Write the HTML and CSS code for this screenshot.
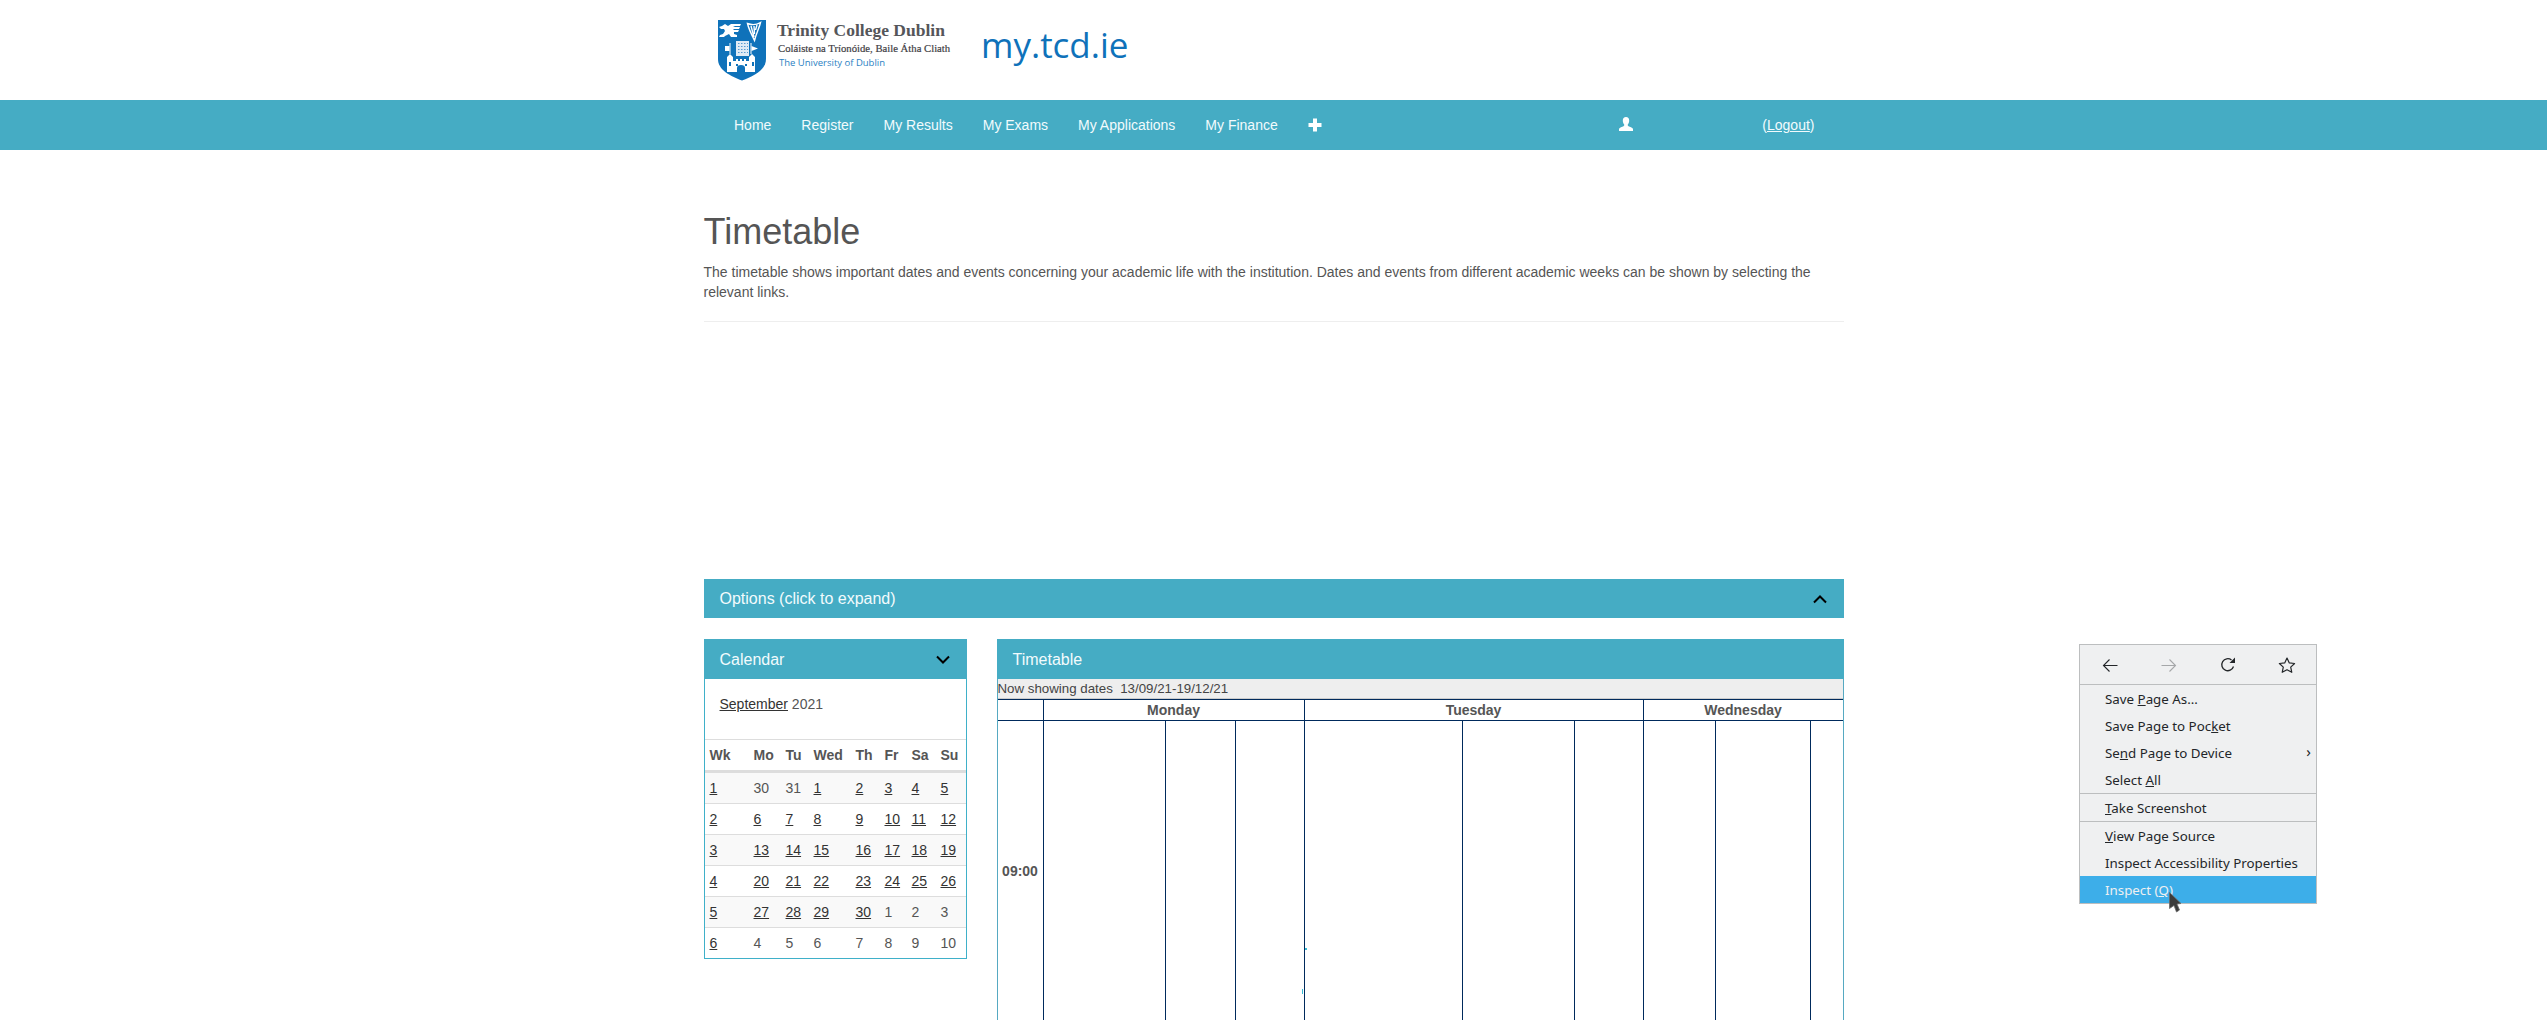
FILE: index.html
```html
<!DOCTYPE html>
<html lang="en">
<head>
<meta charset="utf-8">
<title>Timetable - my.tcd.ie</title>
<link rel="stylesheet" href="styles.css">
</head>
<body>
<header class="masthead">
  <div class="wrap masthead-inner">
    <div class="logo">
      <svg class="shield" viewBox="0 0 48 61" width="48" height="61" aria-hidden="true">
        <path fill="#0f72ba" d="M0 0H48V39C48 50 36 56 24 60.500C12 56 0 50 0 39Z"/>
        <path fill="#fff" d="M4 6l3-2 3 2 3-2h10l-1 2h-5l-2 1h7l-1 2h-5l-1 1h6l-1 2h-4l0 2 3 1 0 2-6 0-2-3-4 2-1 1h-5l1-2 3-1 2-3-1-2-3 0-2-2z"/>
        <path fill="none" stroke="#fff" stroke-width="1.400" d="M29.500 3.500c4 1.500 9 1.500 13-1-1 5-4 10-6 18-3-6-6-12-7-17zM33 6l3 11M36 6l0.500 8M39 5l-1.500 5"/>
        <rect x="18" y="21" width="13" height="15" fill="#dfeaf5"/>
        <path fill="none" stroke="#5a9bd2" stroke-width="1.200" stroke-dasharray="1.500 1.500" d="M20 23.500H30M20 26.500H30M20 29.500H30M20 32.500H30"/>
        <path fill="none" stroke="#fff" stroke-width="1" d="M12 23V34M33 23V34"/>
        <path fill="#fff" d="M7 26h4.500v5H7zM33.500 26L40 28.500L33.500 31z"/>
        <path fill="#fff" d="M9 37l3-3 3 3v4h3v-2h2v2h2v-2h2v2h2v-2h2v2h3v-4l3-3 3 3v15H9z"/>
        <path fill="#0f72ba" d="M19 52v-4a4 3 0 0 1 8 0v4zM11 42h2v4h-2zM34 42h2v4h-2zM18 44h2v2h-2zM27 44h2v2h-2z"/>
      </svg>
      <div class="logo-text">
        <div class="logo-name">Trinity College Dublin</div>
        <div class="logo-irish">Coláiste na Tríonóide, Baile Átha Cliath</div>
        <div class="logo-uni">The University of Dublin</div>
      </div>
    </div>
    <div class="site-name">my.tcd.ie</div>
  </div>
</header>

<nav class="navbar">
  <div class="wrap navbar-inner">
    <ul class="nav-links">
      <li><a href="#">Home</a></li>
      <li><a href="#">Register</a></li>
      <li><a href="#">My Results</a></li>
      <li><a href="#">My Exams</a></li>
      <li><a href="#">My Applications</a></li>
      <li><a href="#">My Finance</a></li>
      <li class="nav-plus">
        <svg viewBox="0 0 14 14" width="14" height="14" aria-hidden="true"><path fill="#fff" d="M5 0.500H9V5H13.500V9H9V13.500H5V9H0.500V5H5Z"/></svg>
      </li>
    </ul>
    <div class="nav-user">
      <svg viewBox="0 0 14 14" width="14" height="14" aria-hidden="true"><path fill="#fff" d="M7 0C4.900 0 3.800 1.500 3.800 3.500C3.800 5.200 4.400 6.700 5.200 7.600C5.400 8.300 5.200 8.900 4.500 9.300C3 10 0.800 10.500 0 11.800V14H14V11.800C13.200 10.500 11 10 9.500 9.300C8.800 8.900 8.600 8.300 8.800 7.600C9.600 6.700 10.200 5.200 10.200 3.500C10.200 1.500 9.100 0 7 0Z"/></svg>
      <span class="logout">(<a href="#">Logout</a>)</span>
    </div>
  </div>
</nav>

<main class="wrap content">
  <h1>Timetable</h1>
  <p class="intro">The timetable shows important dates and events concerning your academic life with the institution. Dates and events from different academic weeks can be shown by selecting the relevant links.</p>
  <hr class="rule">

  <div class="panel-head options">
    <span>Options (click to expand)</span>
    <svg class="chev" viewBox="0 0 14 10" width="14" height="10" aria-hidden="true"><path fill="none" stroke="#000" stroke-width="2" d="M1 8.500L7 2.500L13 8.500"/></svg>
  </div>

  <div class="columns">
    <section class="panel">
      <div class="panel-head">
        <span>Calendar</span>
        <svg class="chev" viewBox="0 0 14 10" width="14" height="10" aria-hidden="true"><path fill="none" stroke="#000" stroke-width="2" d="M1 1.500L7 7.500L13 1.500"/></svg>
      </div>
      <div class="month"><a href="#">September</a> 2021</div>
      <table class="cal">
        <colgroup><col class="c-wk"><col class="c-mo"><col class="c-tu"><col class="c-we"><col class="c-th"><col class="c-fr"><col class="c-sa"><col class="c-su"></colgroup>
        <thead><tr><th>Wk</th><th>Mo</th><th>Tu</th><th>Wed</th><th>Th</th><th>Fr</th><th>Sa</th><th>Su</th></tr></thead>
        <tbody>
          <tr><td><a href="#">1</a></td><td>30</td><td>31</td><td><a href="#">1</a></td><td><a href="#">2</a></td><td><a href="#">3</a></td><td><a href="#">4</a></td><td><a href="#">5</a></td></tr>
          <tr><td><a href="#">2</a></td><td><a href="#">6</a></td><td><a href="#">7</a></td><td><a href="#">8</a></td><td><a href="#">9</a></td><td><a href="#">10</a></td><td><a href="#">11</a></td><td><a href="#">12</a></td></tr>
          <tr><td><a href="#">3</a></td><td><a href="#">13</a></td><td><a href="#">14</a></td><td><a href="#">15</a></td><td><a href="#">16</a></td><td><a href="#">17</a></td><td><a href="#">18</a></td><td><a href="#">19</a></td></tr>
          <tr><td><a href="#">4</a></td><td><a href="#">20</a></td><td><a href="#">21</a></td><td><a href="#">22</a></td><td><a href="#">23</a></td><td><a href="#">24</a></td><td><a href="#">25</a></td><td><a href="#">26</a></td></tr>
          <tr><td><a href="#">5</a></td><td><a href="#">27</a></td><td><a href="#">28</a></td><td><a href="#">29</a></td><td><a href="#">30</a></td><td>1</td><td>2</td><td>3</td></tr>
          <tr><td><a href="#">6</a></td><td>4</td><td>5</td><td>6</td><td>7</td><td>8</td><td>9</td><td>10</td></tr>
        </tbody>
      </table>
    </section>

    <section class="panel panel-open">
      <div class="panel-head"><span>Timetable</span></div>
      <div class="showing">Now showing dates&nbsp; 13/09/21-19/12/21</div>
      <table class="tt">
        <colgroup><col class="t1"><col class="t2"><col class="t3"><col class="t4"><col class="t5"><col class="t6"><col class="t7"><col class="t8"><col class="t9"><col class="t10"></colgroup>
        <thead><tr><th></th><th colspan="3">Monday</th><th colspan="3">Tuesday</th><th colspan="3">Wednesday</th></tr></thead>
        <tbody>
          <tr>
            <th class="time">09:00</th>
            <td></td><td></td>
            <td class="ticked"><span class="tick tick-a"></span></td>
            <td class="ticked"><span class="tick tick-b"></span></td>
            <td></td><td></td><td></td><td></td><td></td>
          </tr>
        </tbody>
      </table>
    </section>
  </div>
</main>

<div class="ctx-menu">
  <div class="ctx-tools">
    <svg viewBox="0 0 16 14" width="16" height="14" aria-hidden="true"><path fill="none" stroke="#232629" stroke-width="1.100" d="M15.500 7.500H1.500M7.500 1.500L1.500 7.500L7.500 13.500"/></svg>
    <svg viewBox="0 0 16 14" width="16" height="14" aria-hidden="true"><path fill="none" stroke="#a5a7a9" stroke-width="1.100" d="M0.500 7.500H14.500M8.500 1.500L14.500 7.500L8.500 13.500"/></svg>
    <svg viewBox="0 0 16 16" width="16" height="16" aria-hidden="true"><path fill="none" stroke="#232629" stroke-width="1.300" d="M13.500 9.500A6 6 0 1 1 11.500 3"/><path fill="#232629" d="M15 0.500V6H9.500Z"/></svg>
    <svg class="ctx-star" viewBox="0 0 18 16" width="18" height="16" aria-hidden="true"><path fill="none" stroke="#232629" stroke-width="1.200" stroke-linejoin="round" d="M9 1L11.300 5.900L16.600 6.500L12.700 10.100L13.800 15.300L9 12.700L4.200 15.300L5.300 10.100L1.400 6.500L6.700 5.900Z"/></svg>
  </div>
  <div class="ctx-item">Save <u>P</u>age As…</div>
  <div class="ctx-item">Save Page to Poc<u>k</u>et</div>
  <div class="ctx-item">Se<u>n</u>d Page to Device<span class="ctx-more">›</span></div>
  <div class="ctx-item">Select <u>A</u>ll</div>
  <div class="ctx-sep"></div>
  <div class="ctx-item"><u>T</u>ake Screenshot</div>
  <div class="ctx-sep"></div>
  <div class="ctx-item"><u>V</u>iew Page Source</div>
  <div class="ctx-item">Inspect Accessibility Properties</div>
  <div class="ctx-item ctx-active">Inspect (<u>Q</u>)</div>
</div>
<svg class="cursor" viewBox="0 0 13 21" width="13" height="21" aria-hidden="true"><path fill="#3b3b3b" stroke="#6a6a6a" stroke-width="0.800" d="M0.500 0.500L12 11.500L8 12L10.500 18L7.500 20L5 13.500L0.500 16.500Z"/></svg>
</body>
</html>
```

FILE: styles.css
```css
* { box-sizing: border-box; }
html, body { margin: 0; padding: 0; height: 1020px; overflow: hidden; background: #fff; }
body { font-family: "Liberation Sans", Arial, sans-serif; font-size: 14px; line-height: 20px; color: #555; position: relative; }
a { color: inherit; }

.wrap { width: 1140px; margin-left: 703.5px; }

.masthead { height: 100px; }
.masthead-inner { display: flex; align-items: flex-start; padding-left: 14.5px; }
.logo { display: flex; width: 263px; padding-top: 20px; }
.shield { flex: none; display: block; }
.logo-text { margin-left: 11px; }
.logo-name { font-family: "Liberation Serif", serif; font-weight: 700; font-size: 17.500px; line-height: 20px; color: #55565a; white-space: nowrap; }
.logo-irish { font-family: "Liberation Serif", serif; font-weight: 400; font-size: 10.700px; line-height: 14px; color: #3f4044; -webkit-text-stroke: 0.2px #3f4044; white-space: nowrap; margin-top: 1px; margin-left: 1px; }
.logo-uni { font-family: "Open Sans", sans-serif; font-size: 9.500px; line-height: 14px; color: #2b7fc3; white-space: nowrap; margin-top: 1px; margin-left: 2px; }
.site-name { font-family: "Open Sans", sans-serif; font-size: 35px; line-height: 50px; color: #0f72ba; padding-top: 20px; }

.navbar { height: 50px; background: #45acc4; color: #f2fbfd; }
.navbar-inner { display: flex; justify-content: space-between; height: 50px; padding-left: 15.500px; }
.nav-links { display: flex; list-style: none; margin: 0; padding: 0; }
.nav-links a { display: block; padding: 0 15px; line-height: 50px; text-decoration: none; }
.nav-plus { display: flex; align-items: center; padding-left: 15.500px; }
.nav-plus svg { display: block; margin-top: -1px; }
.nav-user { display: flex; align-items: center; gap: 129px; padding-right: 29px; }
.nav-user svg { display: block; margin-top: -2px; }
.logout { line-height: 50px; }

h1 { margin: 0; padding-top: 62px; font-size: 36px; font-weight: 400; line-height: 40px; color: #555; }
.intro { margin: 10px 0 0; }
.rule { margin: 19px 0 0; border: 0; height: 1px; background: #eee; }

.panel-head { display: flex; justify-content: space-between; align-items: center; height: 40px; padding: 0 17px 0 16px; background: #45acc4; color: #f2fbfd; font-size: 16px; }
.options { height: 39px; margin-top: 257px; }
.chev { display: block; flex: none; }

.columns { display: grid; grid-template-columns: 263px 847px; column-gap: 30px; margin-top: 21px; align-items: start; }
.panel { border: 1px solid #3fb0c9; border-top: 0; }
.panel > .panel-head { margin: 0 -1px; padding-top: 1px; }
.panel-open { border-color: #56a9c2; border-bottom: 0; }

.month { height: 60px; padding: 15px 0 0 15px; color: #555; }
.month a { color: #333; }

.cal { width: 261px; table-layout: fixed; border-collapse: separate; border-spacing: 0; }
.c-wk { width: 44px; } .c-mo { width: 32px; } .c-tu { width: 28px; } .c-we { width: 42px; }
.c-th { width: 29px; } .c-fr { width: 27px; } .c-sa { width: 29px; } .c-su { width: 30px; }
.cal th, .cal td { padding: 5px; text-align: left; line-height: 20px; border-top: 1px solid #ddd; white-space: nowrap; }
.cal thead th { border-bottom: 2px solid #ddd; font-weight: 700; }
.cal tbody tr:nth-child(odd) { background: #f9f9f9; }
.cal a { color: #333; }

.showing { height: 20px; line-height: 19px; font-size: 13.300px; background: #eee; border-bottom: 1px solid #ccc; color: #444; }

.tt { width: 845px; table-layout: fixed; border-collapse: separate; border-spacing: 0; border-top: 1px solid #002a5c; }
.t1 { width: 46px; } .t2 { width: 122px; } .t3 { width: 70px; } .t4 { width: 69px; } .t5 { width: 158px; }
.t6 { width: 112px; } .t7 { width: 69px; } .t8 { width: 72px; } .t9 { width: 95px; } .t10 { width: 32px; }
.tt th, .tt td { padding: 0; border-right: 1px solid #002a5c; border-bottom: 1px solid #002a5c; }
.tt tr > :last-child { border-right: 0; }
.tt thead th { height: 21px; line-height: 20px; text-align: center; font-weight: 700; }
.tt tbody tr { height: 301px; }
.tt .time { text-align: center; font-weight: 700; }
.ticked { position: relative; }
.tick { position: absolute; background: #36bcd6; }
.tick-a { right: 1px; top: 268px; width: 1px; height: 5px; }
.tick-b { left: 0; top: 227px; width: 2px; height: 2px; }

.ctx-menu { position: absolute; left: 2079px; top: 644px; width: 238px; border: 1px solid #bcbebf; background: #eff0f1; font-family: "Noto Sans", sans-serif; font-size: 13.330px; color: #232629; }
.ctx-tools { display: flex; align-items: center; height: 40px; padding-left: 22px; gap: 43px; border-bottom: 1px solid #bcbebf; }
.ctx-tools svg { display: block; flex: none; }
.ctx-tools .ctx-star { margin-left: -1px; }
.ctx-item { position: relative; height: 27px; padding: 1px 0 0 25px; line-height: 27px; white-space: nowrap; }
.ctx-more { position: absolute; right: 5px; top: -1px; font-size: 15px; }
.ctx-sep { height: 1px; background: #bcbebf; }
.ctx-active { background: #3daee9; color: #eff0f1; }
.cursor { position: absolute; left: 2169px; top: 892px; display: block; }
```
